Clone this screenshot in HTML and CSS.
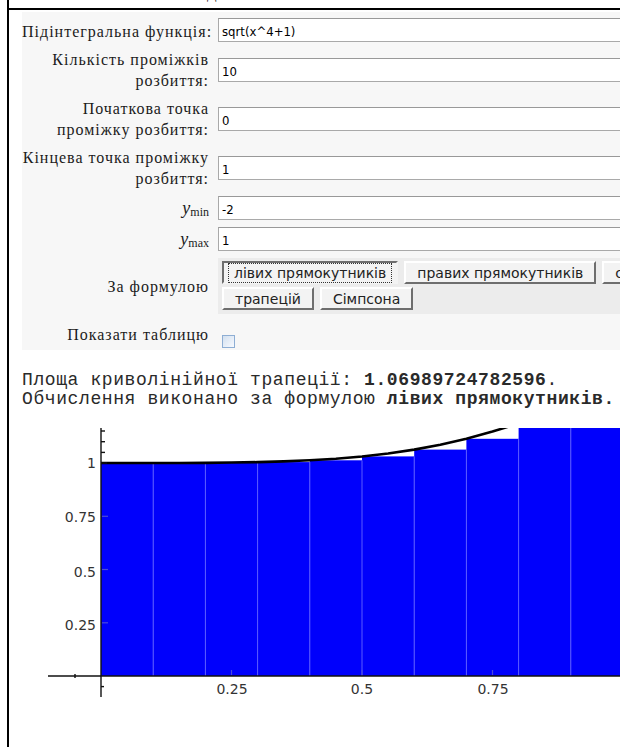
FILE: index.html
```html
<!DOCTYPE html>
<html lang="uk">
<head>
<meta charset="utf-8">
<title>Обчислення визначеного інтеграла</title>
<link rel="stylesheet" href="styles.css">
</head>
<body>
<div class="sheet">
  <div class="caption"><span>Д</span></div>
  <div class="cell">
    <form class="params">
      <label class="lbl first" for="fn">Підінтегральна функція:</label>
      <input class="field" id="fn" type="text" value="sqrt(x^4+1)">

      <label class="lbl" for="parts">Кількість проміжків<br>розбиття:</label>
      <input class="field" id="parts" type="text" value="10">

      <label class="lbl" for="from">Початкова точка<br>проміжку розбиття:</label>
      <input class="field" id="from" type="text" value="0">

      <label class="lbl" for="to">Кінцева точка проміжку<br>розбиття:</label>
      <input class="field" id="to" type="text" value="1">

      <label class="lbl math" for="ymin"><i>y</i><sub>min</sub></label>
      <input class="field" id="ymin" type="text" value="-2">

      <label class="lbl math" for="ymax"><i>y</i><sub>max</sub></label>
      <input class="field" id="ymax" type="text" value="1">

      <span class="lbl">За формулою</span>
      <div class="methods">
        <div class="btn-row">
          <button type="button" class="btn pressed"><span>лівих прямокутників</span></button>
          <button type="button" class="btn">правих прямокутників</button>
          <button type="button" class="btn">середніх прямокутників</button>
        </div>
        <div class="btn-row">
          <button type="button" class="btn">трапецій</button>
          <button type="button" class="btn">Сімпсона</button>
        </div>
      </div>

      <label class="lbl" for="table">Показати таблицю</label>
      <div class="check"><input class="box" id="table" type="checkbox"></div>
    </form>

    <div class="result">
      <p>Площа криволінійної трапеції: <b>1.06989724782596</b>.</p>
      <p>Обчислення виконано за формулою <b>лівих прямокутників.</b></p>
    </div>

    <svg class="plot" width="620" height="332" viewBox="22 415 620 332" xmlns="http://www.w3.org/2000/svg">
      <defs>
        <clipPath id="area"><rect x="40" y="428" width="600" height="300"/></clipPath>
      </defs>
      <g clip-path="url(#area)">
        <g class="bars">
          <rect x="101" y="463" width="52.2" height="213"/>
          <rect x="153.2" y="463" width="52.2" height="213"/>
          <rect x="205.4" y="462.8" width="52.2" height="213.2"/>
          <rect x="257.6" y="462.1" width="52.2" height="213.9"/>
          <rect x="309.8" y="460.3" width="52.2" height="215.7"/>
          <rect x="362" y="456.4" width="52.2" height="219.6"/>
          <rect x="414.2" y="449.6" width="52.2" height="226.4"/>
          <rect x="466.4" y="438.8" width="52.2" height="237.2"/>
          <rect x="518.6" y="423.1" width="52.2" height="252.9"/>
          <rect x="570.8" y="401.9" width="52.2" height="274.1"/>
        </g>
        <g class="edges">
          <line x1="153.2" y1="463" x2="153.2" y2="676"/>
          <line x1="205.4" y1="463" x2="205.4" y2="676"/>
          <line x1="257.6" y1="463" x2="257.6" y2="676"/>
          <line x1="309.8" y1="462.1" x2="309.8" y2="676"/>
          <line x1="362" y1="460.3" x2="362" y2="676"/>
          <line x1="414.2" y1="456.4" x2="414.2" y2="676"/>
          <line x1="466.4" y1="449.6" x2="466.4" y2="676"/>
          <line x1="518.6" y1="438.8" x2="518.6" y2="676"/>
          <line x1="570.8" y1="428" x2="570.8" y2="676"/>
        </g>
        <path class="curve" d="M101,463 L127.1,463 153.2,463 179.3,462.95 205.4,462.83 231.5,462.56 257.6,462.14 283.7,461.41 309.8,460.29 335.9,458.68 362,456.44 388.1,453.47 414.2,449.62 440.3,444.77 466.4,438.8 492.5,431.61 508.2,426.68"/>
      </g>
      <g class="axes">
        <line x1="48" y1="676" x2="640" y2="676"/>
        <line x1="101" y1="428" x2="101" y2="697"/>
        <line x1="101" y1="431" x2="105" y2="431"/>
        <line x1="101" y1="441.7" x2="105" y2="441.7"/>
        <line x1="101" y1="452.4" x2="105" y2="452.4"/>
        <line x1="101" y1="463" x2="107" y2="463"/>
        <line x1="75" y1="674" x2="75" y2="678"/>
        <line x1="101" y1="686.6" x2="104" y2="686.6"/>
      </g>
      <g class="inner-ticks">
        <line x1="102" y1="516.3" x2="108" y2="516.3"/>
        <line x1="102" y1="569.5" x2="108" y2="569.5"/>
        <line x1="102" y1="622.8" x2="108" y2="622.8"/>
        <line x1="231.5" y1="670" x2="231.5" y2="675"/>
        <line x1="362" y1="670" x2="362" y2="675"/>
        <line x1="492.5" y1="670" x2="492.5" y2="675"/>
      </g>
      <g class="ticklabels">
        <text x="96" y="468" text-anchor="end">1</text>
        <text x="96" y="522" text-anchor="end">0.75</text>
        <text x="96" y="576.5" text-anchor="end">0.5</text>
        <text x="96" y="629.5" text-anchor="end">0.25</text>
        <text x="232" y="694" text-anchor="middle">0.25</text>
        <text x="362" y="694" text-anchor="middle">0.5</text>
        <text x="493" y="694" text-anchor="middle">0.75</text>
      </g>
    </svg>
  </div>
</div>
</body>
</html>
```

FILE: styles.css
```css
html, body {
  margin: 0;
  padding: 0;
  overflow: hidden;
  background: #fff;
}

body {
  font-family: "Liberation Serif", serif;
  color: #1b1b1b;
}

/* outer table frame: heavy left rule and a heavy rule under the heading row */
.sheet {
  margin-left: 7px;
  border-left: 2px solid #000;
  min-height: 100vh;
}

.caption {
  height: 8px;
  overflow: hidden;
  font-size: 14px;
}

.caption span {
  display: block;
  padding-left: 198px;
  margin-top: -13px;
  line-height: 16px;
}

.cell {
  border-top: 2px solid #000;
  overflow: hidden;
  padding-left: 13px;
}

/* parameters form */
.params {
  display: grid;
  grid-template-columns: 187px 800px;
  column-gap: 9px;
  row-gap: 7px;
  width: max-content;
  margin-top: 2px;
  padding: 6px 0 2px;
  background: #f7f7f7;
}

.lbl {
  align-self: center;
  text-align: right;
  font-size: 16px;
  line-height: 21px;
  letter-spacing: 1px;
  white-space: nowrap;
}

.lbl.first {
  padding-top: 3px;
}

.lbl.math i {
  font-size: 18px;
  line-height: 0;
  letter-spacing: 0;
}

.lbl.math sub {
  font-size: 12px;
  line-height: 0;
  vertical-align: -2px;
  letter-spacing: 0;
}

.field {
  align-self: center;
  box-sizing: border-box;
  height: 24px;
  margin: 0;
  padding: 3px 3px 0;
  border: 1px solid #a9a9a9;
  border-top-color: #999;
  background: #fff;
  font: 13px "DejaVu Sans Condensed", "DejaVu Sans", sans-serif;
  color: #000;
  outline: none;
}

.methods {
  display: flex;
  flex-direction: column;
  gap: 3px;
  padding: 3px 0 4px 4px;
  background: #ececec;
}

.btn-row {
  display: flex;
  gap: 6px;
}

.btn {
  box-sizing: border-box;
  height: 23px;
  margin: 0;
  padding: 0 11px;
  border: 2px solid;
  border-color: #fff #6e6e6e #6e6e6e #fff;
  background: #f3f3f3;
  font: 14px "DejaVu Sans", sans-serif;
  color: #222;
  white-space: nowrap;
}

.btn.pressed {
  border-color: #6e6e6e #f3f3f3 #f3f3f3 #6e6e6e;
  padding: 0 5px;
}

.btn.pressed span {
  display: inline-block;
  padding: 1px 5px;
  outline: 1px dotted #333;
}

.check {
  align-self: start;
}

.box {
  appearance: none;
  display: block;
  width: 13px;
  height: 13px;
  margin: 14px 0 0 4px;
  border: 1px solid #8eaed4;
  background: linear-gradient(135deg, #d3e0ef, #f7faff);
}

/* computed result */
.result {
  margin-top: 21px;
  font: 18px "Liberation Mono", monospace;
  line-height: 19px;
  letter-spacing: 0.6px;
  color: #2a2a2a;
}

.result p {
  margin: 0;
  white-space: nowrap;
}

/* plot of the integrand with left rectangles */
.plot {
  display: block;
  margin-top: 6px;
}

.bars rect {
  fill: #0000fc;
}

.edges line {
  stroke: #5a5aff;
  stroke-width: 1;
}

.curve {
  fill: none;
  stroke: #000;
  stroke-width: 2.6;
  stroke-linejoin: round;
}

.axes line {
  stroke: #111;
  stroke-width: 1.4;
}

.inner-ticks line {
  stroke: #4a4ad8;
  stroke-width: 1.2;
}

.ticklabels text {
  font-family: "DejaVu Sans", sans-serif;
  font-size: 14px;
  fill: #333;
}
```
